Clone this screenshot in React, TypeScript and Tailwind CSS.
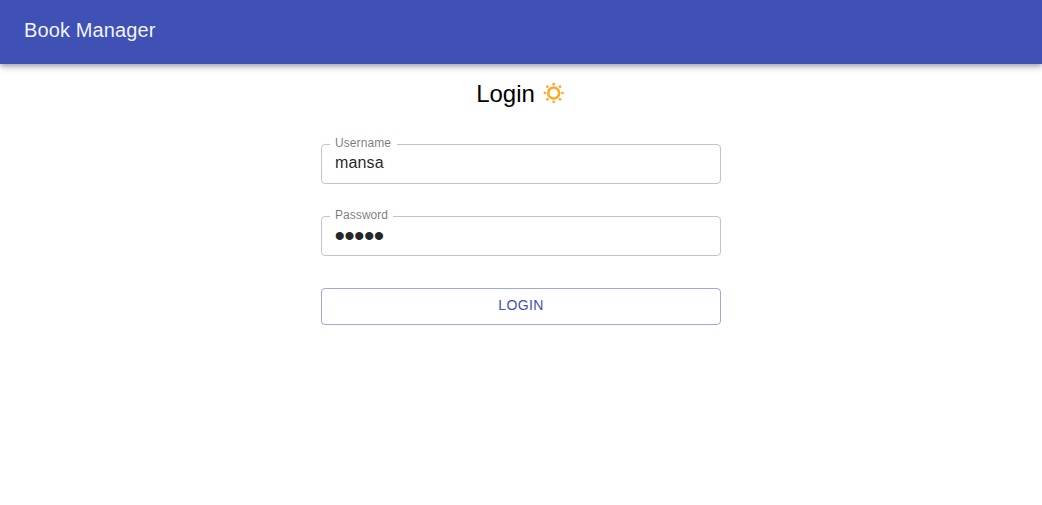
import { useState } from "react";

type FieldProps = {
  label: string;
  type: string;
  value: string;
  legendClass: string;
  inputClass: string;
  onChange: (v: string) => void;
};

function Field({ label, type, value, legendClass, inputClass, onChange }: FieldProps) {
  return (
    <fieldset className="h-[45px] w-full rounded border border-black/23 px-2">
      <legend className={`h-[11px] pl-[5px] text-xs leading-[9px] text-black/54 ${legendClass}`}>{label}</legend>
      <input
        aria-label={label}
        type={type}
        value={value}
        onChange={(e) => onChange(e.target.value)}
        className={`block w-full pr-[5px] text-black/87 outline-none ${inputClass}`}
      />
    </fieldset>
  );
}

function SunIcon() {
  return (
    <svg className="size-6" viewBox="0 0 24 24" fill="#ffa726">
      <circle cx="11.7" cy="12" r="5.5" fill="none" stroke="#ffa726" strokeWidth="2.5" />
      <circle cx="11.7" cy="3.2" r="1.35" />
      <circle cx="11.7" cy="20.8" r="1.35" />
      <circle cx="2.9" cy="12" r="1.35" />
      <circle cx="20.5" cy="12" r="1.35" />
      <circle cx="5.4" cy="5.7" r="1.35" />
      <circle cx="18" cy="5.7" r="1.35" />
      <circle cx="5.4" cy="18.3" r="1.35" />
      <circle cx="18" cy="18.3" r="1.35" />
    </svg>
  );
}

export default function App() {
  const [username, setUsername] = useState("mansa");
  const [password, setPassword] = useState("mansa");
  return (
    <div className="min-h-screen bg-white font-['Liberation_Sans',sans-serif]">
      <header className="flex h-16 items-center bg-[#3f51b5] px-6 pb-1 shadow-[0_2px_4px_-1px_rgba(0,0,0,0.2),0_4px_5px_0_rgba(0,0,0,0.14),0_1px_10px_0_rgba(0,0,0,0.12)]">
        <h1 className="text-xl leading-8 tracking-[0.13px] text-white/95">Book Manager</h1>
      </header>
      <main className="mx-auto flex w-[400px] flex-col">
        <h2 className="mt-[13px] flex h-8 items-center justify-center gap-[7px] text-2xl text-black">
          <span className="pt-0.5">Login</span>
          <SunIcon />
        </h2>
        <form className="mt-[30px] flex flex-col" onSubmit={(e) => e.preventDefault()}>
          <Field
            label="Username"
            type="text"
            value={username}
            onChange={setUsername}
            legendClass="pr-1.5 tracking-[0.09px]"
            inputClass="mt-[3px] h-[19px] pl-[5px] text-base leading-[19px] tracking-[0.15px]"
          />
          <div className="h-[27px]" />
          <Field
            label="Password"
            type="password"
            value={password}
            onChange={setPassword}
            legendClass="pr-[5px] tracking-[0.05px]"
            inputClass="mt-px h-[26px] pl-[4.5px] text-[30px] leading-[26px] tracking-[-0.7px]"
          />
          <button className="mt-8 h-[37px] rounded border border-[#3f51b5]/50 pb-1 text-sm tracking-[0.4px] text-[#3f51b5]">LOGIN</button>
        </form>
      </main>
    </div>
  );
}
